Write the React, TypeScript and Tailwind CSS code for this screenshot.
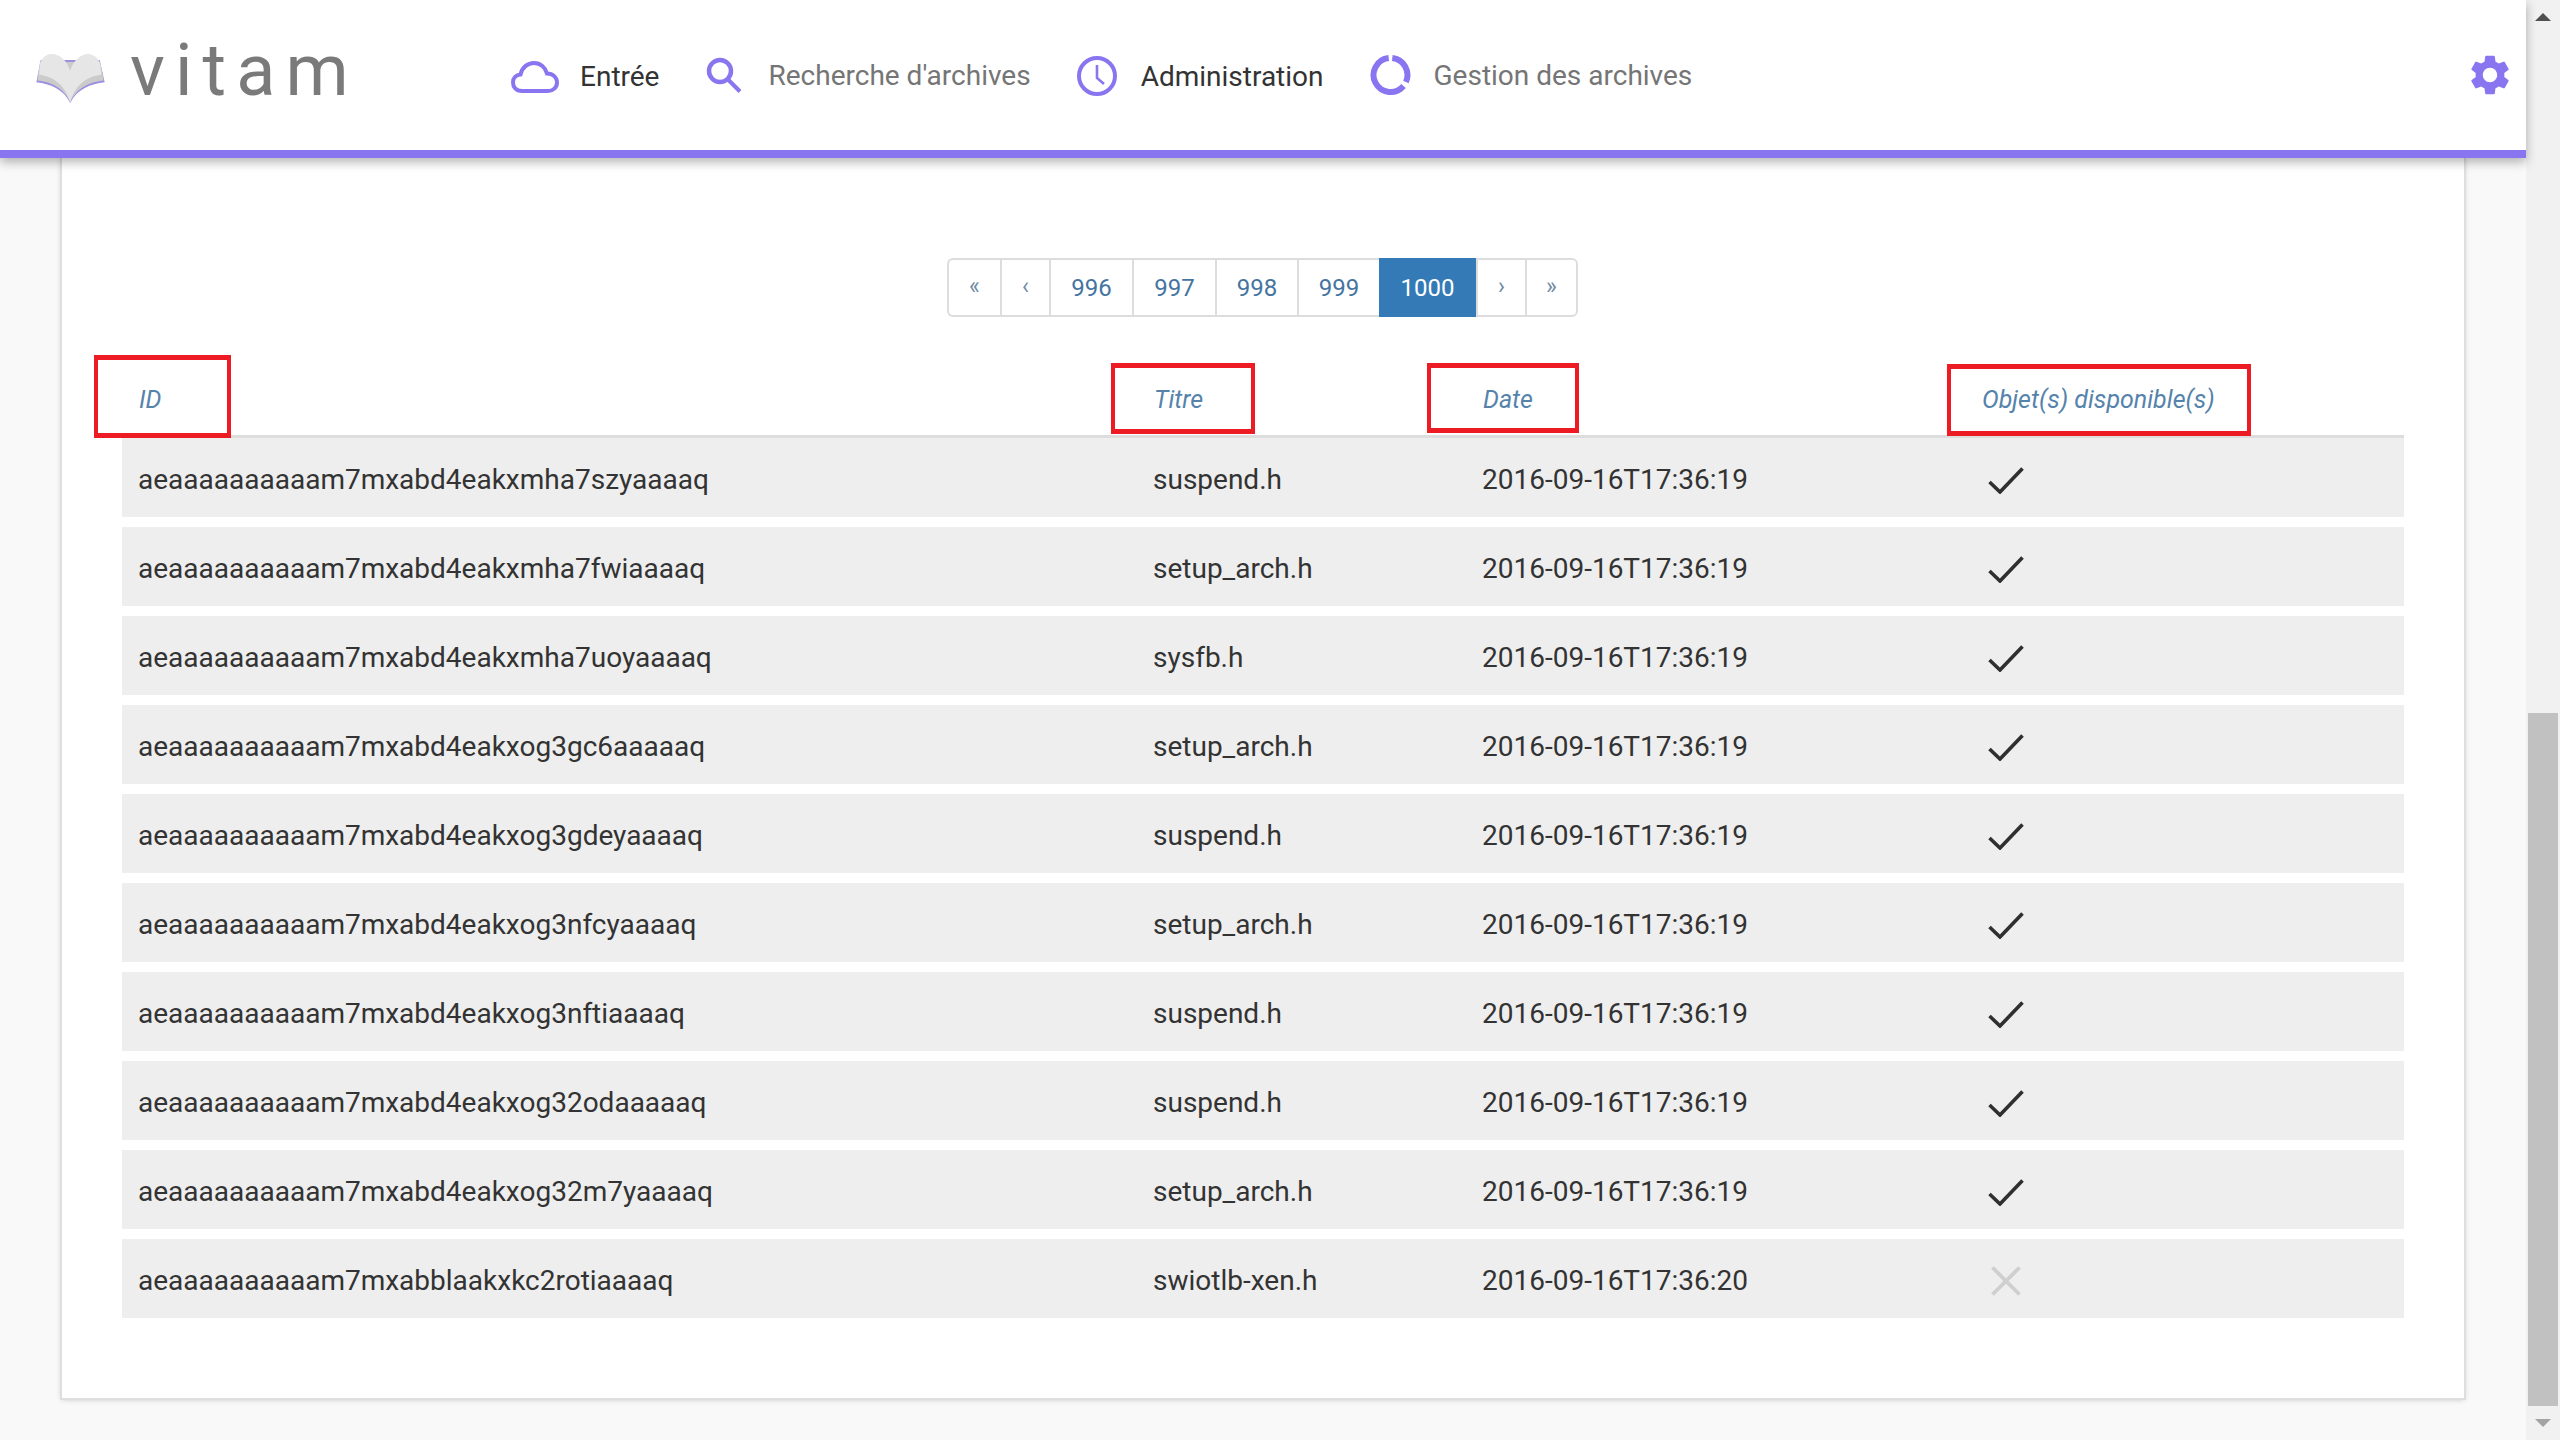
import { MdSettings } from 'react-icons/md';

const ROWS = [
  { id: 'aeaaaaaaaaaam7mxabd4eakxmha7szyaaaaq', title: 'suspend.h', date: '2016-09-16T17:36:19', ok: true },
  { id: 'aeaaaaaaaaaam7mxabd4eakxmha7fwiaaaaq', title: 'setup_arch.h', date: '2016-09-16T17:36:19', ok: true },
  { id: 'aeaaaaaaaaaam7mxabd4eakxmha7uoyaaaaq', title: 'sysfb.h', date: '2016-09-16T17:36:19', ok: true },
  { id: 'aeaaaaaaaaaam7mxabd4eakxog3gc6aaaaaq', title: 'setup_arch.h', date: '2016-09-16T17:36:19', ok: true },
  { id: 'aeaaaaaaaaaam7mxabd4eakxog3gdeyaaaaq', title: 'suspend.h', date: '2016-09-16T17:36:19', ok: true },
  { id: 'aeaaaaaaaaaam7mxabd4eakxog3nfcyaaaaq', title: 'setup_arch.h', date: '2016-09-16T17:36:19', ok: true },
  { id: 'aeaaaaaaaaaam7mxabd4eakxog3nftiaaaaq', title: 'suspend.h', date: '2016-09-16T17:36:19', ok: true },
  { id: 'aeaaaaaaaaaam7mxabd4eakxog32odaaaaaq', title: 'suspend.h', date: '2016-09-16T17:36:19', ok: true },
  { id: 'aeaaaaaaaaaam7mxabd4eakxog32m7yaaaaq', title: 'setup_arch.h', date: '2016-09-16T17:36:19', ok: true },
  { id: 'aeaaaaaaaaaam7mxabblaakxkc2rotiaaaaq', title: 'swiotlb-xen.h', date: '2016-09-16T17:36:20', ok: false },
];

const PAGES = [
  { label: '«', width: 'w-[53px]', small: true },
  { label: '‹', width: 'w-[49px]', small: true },
  { label: '996', width: 'w-[83px]' },
  { label: '997', width: 'w-[83px]' },
  { label: '998', width: 'w-[82px]' },
  { label: '999', width: 'w-[82px]' },
  { label: '1000', width: 'w-[97px]', active: true },
  { label: '›', width: 'w-[49px]', small: true },
  { label: '»', width: 'w-[53px]', small: true },
];

function pageColor(active?: boolean, small?: boolean) {
  if (active) return 'border-[#337ab7] bg-[#337ab7] text-[#ffffff] text-[24px]';
  if (small) return 'border-l-2 border-[#dddddd] text-[#6f8ba5] text-[23px]';
  return 'border-l-2 border-[#dddddd] text-[#44749f] text-[24px]';
}

function BookLogo() {
  return (
    <svg viewBox="48 100 206 155" className="h-[52px] w-[69px]">
      <path d="M62 124 L49 190 C90 195 130 210 150 252 C170 210 212 195 253 190 L238 124 Z" fill="#9a8fe0" />
      <path d="M60 130 L52 185 C90 189 130 205 150 250 C170 205 212 189 250 185 L240 130 Z" fill="#cbcbcb" />
      <path
        d="M150 156 C140 120 110 100 85 107 C70 112 63 125 60 136 L57 168 C92 172 132 190 150 250 C168 190 208 172 243 168 L240 136 C235 122 228 112 212 107 C190 100 160 120 150 156 Z"
        fill="#e6e6e6"
      />
    </svg>
  );
}

function CloudIcon() {
  return (
    <svg viewBox="0 0 48 32" className="h-[32px] w-[48px]" fill="none" stroke="#8a75f0" strokeWidth="4">
      <path d="M11 30 C5 30 2 26 2 21.5 C2 17 5 14 9.5 13.5 C11 6.5 16.5 2 23 2 C29.5 2 34.5 6.5 36 12.5 C42 12.5 46 16.5 46 21.5 C46 26.5 42 30 37 30 Z" />
    </svg>
  );
}

function SearchIcon() {
  return (
    <svg viewBox="0 0 36 36" className="h-[36px] w-[36px]" fill="none" stroke="#8a75f0">
      <circle cx="14" cy="14" r="11" strokeWidth="4.5" />
      <path d="M21.5 22 L34 34.5" strokeWidth="4" />
    </svg>
  );
}

function ClockIcon() {
  return (
    <svg viewBox="0 0 40 40" className="h-[40px] w-[40px]" fill="none" stroke="#8a75f0">
      <circle cx="20" cy="20" r="18" strokeWidth="4" />
      <path d="M20 9 V22 L27 28" strokeWidth="2.6" />
    </svg>
  );
}

function RingIcon() {
  return (
    <svg viewBox="0 0 40 40" className="h-[40px] w-[41px]" fill="none" stroke="#8a75f0" strokeWidth="6">
      <path d="M18.2 3.1 A17 17 0 1 0 33 31" />
      <path d="M21.8 3.1 A17 17 0 0 1 35.4 27" />
    </svg>
  );
}

function Check() {
  return (
    <svg viewBox="0 0 36 27" className="mt-[1px] h-[27px] w-[36px]" fill="none" stroke="#2f2f2f" strokeWidth="3.6">
      <path d="M1.5 15 L12 25 L34.5 1.5" />
    </svg>
  );
}

function Cross() {
  return (
    <svg viewBox="0 0 30 30" className="ml-[3px] h-[30px] w-[30px]" fill="none" stroke="#cfcfcf" strokeWidth="3.8">
      <path d="M1.5 1.5 L28.5 28.5 M28.5 1.5 L1.5 28.5" />
    </svg>
  );
}

function NavItem({ icon, label, dark, iconClass, textClass }: { icon: React.ReactNode; label: string; dark?: boolean; iconClass: string; textClass: string }) {
  return (
    <div className="flex items-center">
      <div className={iconClass}>{icon}</div>
      <span className={`text-[28px] ${textClass} ${dark ? 'text-[#333333]' : 'text-[#757575]'}`}>{label}</span>
    </div>
  );
}

export default function App() {
  return (
    <div className="flex h-screen w-full overflow-hidden bg-[#f9f9f9] font-['Roboto',sans-serif]">
      <div className="flex w-[2526px] flex-col">
        <header className="relative z-10 flex h-[158px] shrink-0 items-center border-b-8 border-[#8a75f0] bg-white shadow-[0_4px_10px_rgba(0,0,0,0.3)]">
          <div className="ml-[36px] mt-[6px] w-[96px]">
            <BookLogo />
          </div>
          <div className="-ml-[2px] mb-[8px] w-[381px] text-[72px] leading-none font-normal tracking-[0.14em] text-[#7a7a7a]">vitam</div>
          <NavItem icon={<CloudIcon />} label="Entrée" dark iconClass="mr-[21px] mt-[4px]" textClass="mr-[47px] mt-[4px]" />
          <NavItem icon={<SearchIcon />} label="Recherche d'archives" iconClass="mr-[26px]" textClass="mr-[46px] mt-[1px]" />
          <NavItem icon={<ClockIcon />} label="Administration" dark iconClass="mr-[24px] mt-[2px]" textClass="mr-[46px] mt-[3px]" />
          <NavItem icon={<RingIcon />} label="Gestion des archives" iconClass="mr-[23px]" textClass="mt-[1px]" />
          <div className="ml-auto mr-[12px] text-[#8a75f0]">
            <MdSettings size={48} />
          </div>
        </header>

        <main className="ml-[62px] w-[2402px] flex-1 bg-white px-[60px] pt-[100px] shadow-[0_0_0_2px_#dedede,0_1px_6px_rgba(0,0,0,0.25)]">
          <nav className="ml-[825px] flex h-[59px] w-fit">
            {PAGES.map((page, i) => (
              <div
                key={page.label}
                className={`flex h-full items-center justify-center border-y-2 ${page.width} ${pageColor(page.active, page.small)} ${
                  i === 0 ? 'rounded-l-md' : ''
                } ${i === PAGES.length - 1 ? 'rounded-r-md border-r-2' : ''}`}
              >
                {page.label}
              </div>
            ))}
          </nav>

          <div className="relative mt-[46px]">
            <div className="grid h-[75px] grid-cols-[1015px_329px_500px_1fr] items-center border-b-[3px] border-[#dddddd] pt-[2px] text-[25px] text-[#5583ab] italic">
              <div className="pl-[17px]">ID</div>
              <div className="pl-[17px]">Titre</div>
              <div className="pl-[17px]">Date</div>
              <div className="pl-[16px]">Objet(s) disponible(s)</div>
            </div>
            {/* annotation boxes drawn over the header */}
            <div className="absolute top-[-8px] left-[-28px] h-[83px] w-[137px] border-x-4 border-y-[5px] border-[#ed1c24]" />
            <div className="absolute top-0 left-[989px] h-[71px] w-[144px] border-x-4 border-y-[5px] border-[#ed1c24]" />
            <div className="absolute top-0 left-[1305px] h-[70px] w-[152px] border-x-4 border-y-[5px] border-[#ed1c24]" />
            <div className="absolute top-px left-[1825px] h-[72px] w-[304px] border-x-4 border-y-[5px] border-[#ed1c24]" />

            <div className="flex flex-col gap-[10px]">
              {ROWS.map((row) => (
                <div
                  key={row.id}
                  className="grid h-[79px] grid-cols-[1015px_329px_500px_1fr] items-center bg-[#eeeeee] pt-[4px] text-[28px] text-[#333333]"
                >
                  <div className="pl-[16px]">{row.id}</div>
                  <div className="pl-[16px]">{row.title}</div>
                  <div className="pl-[16px]">{row.date}</div>
                  <div className="pl-[22px]">{row.ok ? <Check /> : <Cross />}</div>
                </div>
              ))}
            </div>
          </div>
        </main>
        <div className="h-[42px] shrink-0" />
      </div>

      {/* scrollbar */}
      <div className="flex w-[34px] shrink-0 flex-col bg-[#f1f1f1]">
        <div className="flex h-[34px] items-center justify-center">
          <div className="h-0 w-0 border-x-[8px] border-b-[8px] border-x-transparent border-b-[#505050]" />
        </div>
        <div className="flex-1" />
        <div className="mx-[2px] h-[693px] bg-[#c1c1c1]" />
        <div className="flex h-[34px] items-center justify-center">
          <div className="h-0 w-0 border-x-[8px] border-t-[8px] border-x-transparent border-t-[#a3a3a3]" />
        </div>
      </div>
    </div>
  );
}
